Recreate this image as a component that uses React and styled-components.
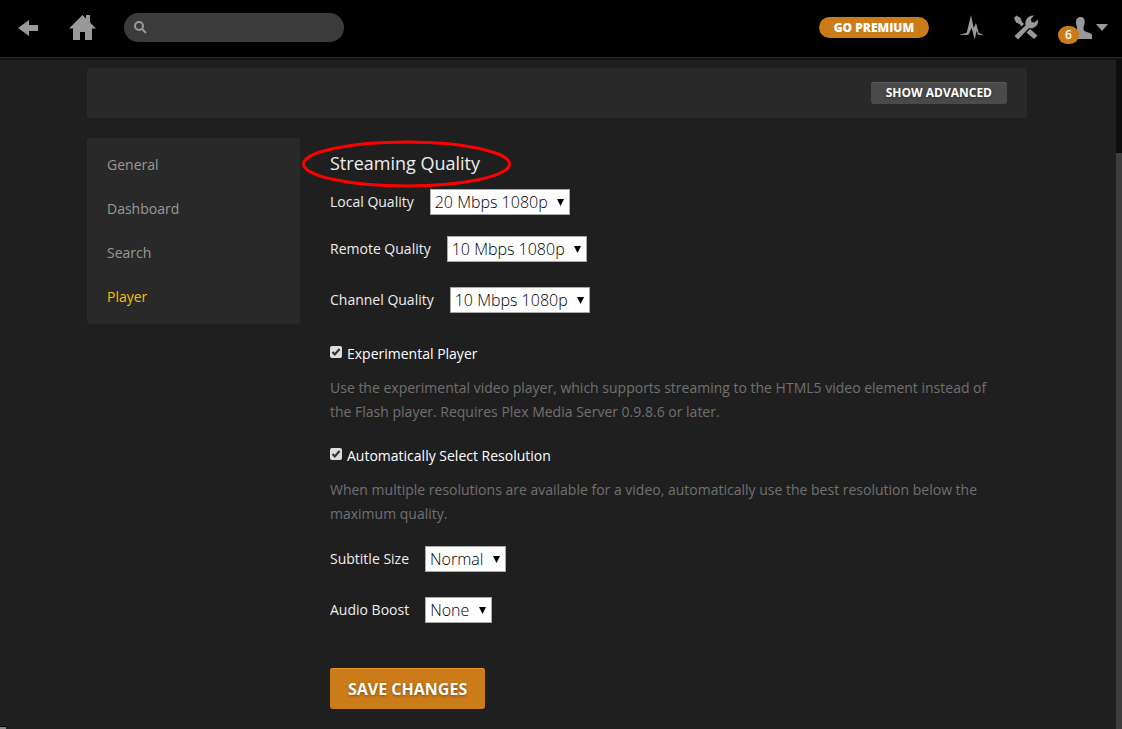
import React from 'react';
import styled, { createGlobalStyle, css } from 'styled-components';

const color = {
  page: '#1f1f1f',
  panel: '#292929',
  input: '#3b3b3b',
  icon: '#999',
  muted: '#707070',
  text: '#eee',
  orange: '#cc7b19',
  active: '#f9be03',
};

const GlobalStyle = createGlobalStyle`
  * {
    box-sizing: border-box;
  }

  body {
    margin: 0;
    background: ${color.page};
    color: ${color.text};
    font-family: 'Open Sans', sans-serif;
    font-size: 14px;
    line-height: 24px;
  }
`;

const Page = styled.div`
  display: flex;
  flex-direction: column;
  min-height: 100vh;
`;

const NavBar = styled.header`
  display: flex;
  align-items: center;
  justify-content: space-between;
  height: 60px;
  padding: 0 14px 5px 18px;
  background: #000;
  box-shadow: inset 0 -2px #111, inset 0 -3px #2b2b2b;
`;

const NavGroup = styled.div`
  display: flex;
  align-items: center;
  gap: ${props => props.$gap}px;
`;

const NavLink = styled.a`
  display: flex;
  align-items: center;
  color: ${color.icon};

  svg {
    display: block;
    fill: currentColor;
  }
`;

const SearchBox = styled.label`
  display: flex;
  align-items: center;
  gap: 8px;
  width: 220px;
  height: 29px;
  padding: 0 10px;
  border-radius: 15px;
  background: ${color.input};
`;

const SearchInput = styled.input`
  flex: 1;
  min-width: 0;
  border: 0;
  outline: 0;
  background: none;
  color: ${color.text};
  font: inherit;
`;

const PremiumLink = styled.a`
  height: 21px;
  padding: 0 15px;
  border-radius: 11px;
  background: ${color.orange};
  color: #fff;
  font-size: 12px;
  font-weight: 800;
  line-height: 21px;
  text-decoration: none;
`;

const UserLink = styled(NavLink)`
  position: relative;
  gap: 4px;
  margin-left: 8px;
  text-decoration: none;
`;

const Badge = styled.span`
  position: absolute;
  left: -18px;
  top: 9px;
  width: 21px;
  height: 18px;
  border-radius: 9px;
  background: ${color.orange};
  color: #fff;
  font-size: 12px;
  font-weight: 600;
  line-height: 18px;
  text-align: center;
`;

const Body = styled.div`
  display: flex;
  flex: 1;
`;

const Container = styled.div`
  width: 100%;
  max-width: 940px;
  margin: 0 auto;
  padding: 8px 0 20px;
`;

const ScrollTrack = styled.div`
  flex: none;
  width: 8px;
  padding: 93px 0 0 2px;
  background: linear-gradient(90deg, ${color.page} 2px, #0d0d0d 2px);
`;

const ScrollThumb = styled.div`
  height: 100%;
  background: #3d3d3d;
`;

const StatusMark = styled.div`
  position: fixed;
  left: 0;
  bottom: 0;
  width: 6px;
  height: 3px;
  border-top: 1px solid #000;
  background: #888;
`;

const Toolbar = styled.div`
  display: flex;
  align-items: center;
  justify-content: flex-end;
  height: 50px;
  padding: 0 20px;
  border-radius: 3px;
  background: ${color.panel};
`;

const Button = styled.button`
  border: 0;
  border-radius: 3px;
  color: #fff;
  font-family: inherit;
  font-weight: 700;
  text-shadow: 0 1px 3px rgba(0, 0, 0, 0.4);

  ${props =>
    props.$primary
      ? css`
          height: 41px;
          padding: 0 18px;
          background: ${color.orange};
          box-shadow: inset 0 1px #e59029;
          font-size: 16px;
        `
      : css`
          height: 22px;
          padding: 0 15px 2px;
          background: #4a4a4a;
          box-shadow: inset 0 1px #5c5c5c;
          font-size: 12px;
        `};
`;

const Columns = styled.div`
  display: grid;
  grid-template-columns: 213px 1fr;
  align-items: start;
  gap: 30px;
  margin-top: 20px;
`;

const SideNav = styled.nav`
  display: flex;
  flex-direction: column;
  padding: 5px 20px;
  border-radius: 3px;
  background: ${color.panel};
`;

const SideLink = styled.a`
  color: ${props => (props.$active ? color.active : color.icon)};
  line-height: 44px;
  text-decoration: none;
`;

const Form = styled.form`
  display: flex;
  flex-direction: column;
  align-items: flex-start;
  padding: 13px 20px 0 0;
`;

const Title = styled.h1`
  position: relative;
  margin: 0 0 14px;
  font-size: 18px;
  font-weight: 400;
  line-height: 24px;
`;

const Marker = styled.svg`
  position: absolute;
  left: -29px;
  top: -11px;
`;

const Field = styled.div`
  display: flex;
  align-items: center;
  gap: 16px;
  margin-bottom: ${props => (props.$tight ? 21 : 25)}px;
`;

const SelectWrapper = styled.div`
  display: grid;
  align-items: center;
  justify-items: end;

  > * {
    grid-area: 1 / 1;
  }

  svg {
    margin-right: 6px;
    pointer-events: none;
  }
`;

const Select = styled.select`
  appearance: none;
  height: 26px;
  padding: 0 21px 0 4px;
  border: 1px solid #aaa;
  border-radius: 0;
  background: #fff;
  color: #000;
  font-family: inherit;
  font-size: 16px;
  font-weight: 300;
`;

const OptionList = styled.div`
  display: flex;
  flex-direction: column;
  gap: 20px;
  margin: 4px 0 20px;
`;

const CheckLabel = styled.label`
  display: flex;
  align-items: center;
  gap: 5px;
  color: #fff;
`;

const Checkbox = styled.input`
  appearance: none;
  width: 12px;
  height: 12px;
  margin: 0 0 4px;
  border-radius: 2px;
  background: #ddd;

  &:checked {
    background: #ddd
      url("data:image/svg+xml,%3Csvg xmlns='http://www.w3.org/2000/svg' viewBox='0 0 12 12'%3E%3Cpath d='M2.5 6l2.3 2.4L9.6 3' fill='none' stroke='%23333' stroke-width='2.2'/%3E%3C/svg%3E");
  }
`;

const Help = styled.p`
  margin: 10px 0 0;
  color: ${color.muted};
`;

const Actions = styled.div`
  margin-top: 20px;
`;

const sections = ['General', 'Dashboard', 'Search', 'Player'];

const qualityFields = [
  { id: 'local', label: 'Local Quality', value: '20 Mbps 1080p', tight: true },
  { id: 'remote', label: 'Remote Quality', value: '10 Mbps 1080p' },
  { id: 'channel', label: 'Channel Quality', value: '10 Mbps 1080p' },
];

const playbackFields = [
  { id: 'subtitle', label: 'Subtitle Size', value: 'Normal' },
  { id: 'boost', label: 'Audio Boost', value: 'None' },
];

const options = [
  {
    id: 'experimental',
    label: 'Experimental Player',
    help:
      'Use the experimental video player, which supports streaming to the HTML5 video element instead of the Flash player. Requires Plex Media Server 0.9.8.6 or later.',
  },
  {
    id: 'resolution',
    label: 'Automatically Select Resolution',
    help:
      'When multiple resolutions are available for a video, automatically use the best resolution below the maximum quality.',
  },
];

function SelectField({ id, label, value, tight }) {
  return (
    <Field $tight={tight}>
      <label htmlFor={id}>{label}</label>
      <SelectWrapper>
        <Select id={id} defaultValue={value}>
          <option>{value}</option>
        </Select>
        <svg width="7" height="7" aria-hidden="true">
          <path d="M0 0h7L3.5 7z" />
        </svg>
      </SelectWrapper>
    </Field>
  );
}

function Header() {
  return (
    <NavBar>
      <NavGroup $gap={28}>
        <NavLink href="#back" aria-label="Back">
          <svg width="23" height="16" viewBox="0 0 23 16">
            <path d="M0 8L11 0v5h9v6h-9v5z" />
          </svg>
        </NavLink>
        <NavLink href="#home" aria-label="Home">
          <svg width="27" height="25" viewBox="0 0 27 25">
            <path d="M0 13.5L13.5 0 17 3.500V0h4v7.500l6 6h-4V25h-7v-8h-5v8H4V13.500z" />
          </svg>
        </NavLink>
        <SearchBox>
          <svg width="13" height="13" viewBox="0 0 13 13" fill="none" stroke={color.icon} strokeWidth="2">
            <circle cx="5" cy="5" r="4" />
            <path d="M8 8l4 4" />
          </svg>
          <SearchInput type="text" aria-label="Search" />
        </SearchBox>
      </NavGroup>

      <NavGroup $gap={30}>
        <PremiumLink href="#premium">GO PREMIUM</PremiumLink>
        <NavLink href="#activity" aria-label="Activity">
          <svg width="25" height="25" viewBox="0 0 25 25">
            <path d="M0 19.700L7.700 17.700 12 0l2.700 13L17 8l2.700 9.700 5 2.600-5.700-.6-1.300-4-2 9L12.700 13l-3.400 7z" />
          </svg>
        </NavLink>
        <NavLink href="#settings" aria-label="Settings">
          <svg width="24" height="25" viewBox="0 0 24 25">
            <path d="M.5 21l11-10.500C10.500 5 14 0 20 .5L17 4l.5 3 3 .5 3.500-3c1 5.500-4 10-9 8.500L4 24.500z" />
            <path d="M0 3L2.500.5l4 2.500L8 7l2 2-2.500 2.500L5.500 9 2 7.500z" />
            <path d="M12.500 17.500L16 14l7.500 6.500L20 24z" />
          </svg>
        </NavLink>
        <UserLink href="#account" aria-label="Account">
          <svg width="16" height="22" viewBox="0 0 16 22">
            <path d="M4.500 0C7.500 0 9 2 8.700 5c-.2 2.500-.8 4-1.200 6 0 2 .5 3 2 3.500l5.500 2 1 1.500v4H0v-7l1.300-3C.8 9.500 0 7 0 4.500 0 1.500 2 0 4.500 0z" />
          </svg>
          <svg width="12" height="7" viewBox="0 0 12 7">
            <path d="M0 0h12L6 7z" />
          </svg>
          <Badge>6</Badge>
        </UserLink>
      </NavGroup>
    </NavBar>
  );
}

export default function App() {
  return (
    <Page>
      <GlobalStyle />
      <Header />
      <Body>
        <Container>
          <Toolbar>
            <Button type="button">SHOW ADVANCED</Button>
          </Toolbar>
          <Columns>
            <SideNav>
              {sections.map(name => (
                <SideLink key={name} href={`#${name}`} $active={name === 'Player'}>
                  {name}
                </SideLink>
              ))}
            </SideNav>
            <Form>
              <Title>
                Streaming Quality
                <Marker width="211" height="48" fill="none" stroke="#f00" strokeWidth="3">
                  <ellipse cx="105.500" cy="24" rx="103" ry="22" />
                </Marker>
              </Title>
              {qualityFields.map(field => (
                <SelectField key={field.id} {...field} />
              ))}
              <OptionList>
                {options.map(({ id, label, help }) => (
                  <div key={id}>
                    <CheckLabel>
                      <Checkbox type="checkbox" defaultChecked aria-describedby={id} />
                      {label}
                    </CheckLabel>
                    <Help id={id}>{help}</Help>
                  </div>
                ))}
              </OptionList>
              {playbackFields.map(field => (
                <SelectField key={field.id} {...field} />
              ))}
              <Actions>
                <Button type="button" $primary>
                  SAVE CHANGES
                </Button>
              </Actions>
            </Form>
          </Columns>
        </Container>
        <ScrollTrack>
          <ScrollThumb />
        </ScrollTrack>
      </Body>
      <StatusMark />
    </Page>
  );
}
